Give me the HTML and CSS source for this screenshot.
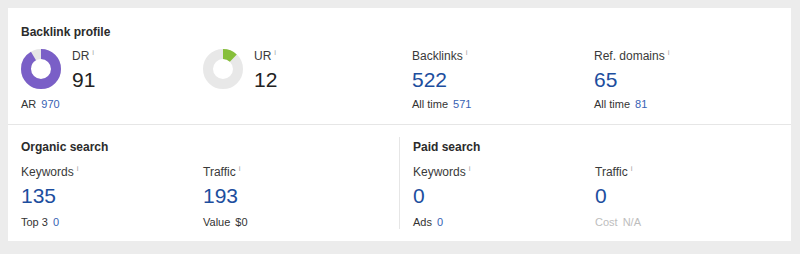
FILE: index.html
```html
<!DOCTYPE html>
<html>
<head>
<meta charset="utf-8">
<link rel="stylesheet" href="styles.css">
</head>
<body>
<div class="card">
  <section class="section top">
    <div class="half">
      <h2 class="title">Backlink profile</h2>
      <div class="metrics">
        <div class="metric">
          <div class="gauge-row">
            <svg class="donut" width="40" height="40" viewBox="0 0 40 40">
              <circle cx="20" cy="20" r="15" fill="none" stroke="#e6e6e6" stroke-width="10"/>
              <circle cx="20" cy="20" r="15" fill="none" stroke="#7a5fc7" stroke-width="10" stroke-dasharray="85.77 100" transform="rotate(-90 20 20)"/>
            </svg>
            <div class="gauge-text">
              <div class="label">DR<span class="info">i</span></div>
              <div class="value dark">91</div>
            </div>
          </div>
          <div class="sub">AR<span class="link">970</span></div>
        </div>
        <div class="metric">
          <div class="gauge-row">
            <svg class="donut" width="40" height="40" viewBox="0 0 40 40">
              <circle cx="20" cy="20" r="15" fill="none" stroke="#e8e8e8" stroke-width="10"/>
              <circle cx="20" cy="20" r="15" fill="none" stroke="#86bf3a" stroke-width="10" stroke-dasharray="11.31 100" transform="rotate(-90 20 20)"/>
            </svg>
            <div class="gauge-text">
              <div class="label">UR<span class="info">i</span></div>
              <div class="value dark">12</div>
            </div>
          </div>
        </div>
      </div>
    </div>
    <div class="half">
      <div class="title-spacer"></div>
      <div class="metrics">
        <div class="metric">
          <div class="label">Backlinks<span class="info">i</span></div>
          <div class="value">522</div>
          <div class="sub">All time<span class="link">571</span></div>
        </div>
        <div class="metric">
          <div class="label">Ref. domains<span class="info">i</span></div>
          <div class="value">65</div>
          <div class="sub">All time<span class="link">81</span></div>
        </div>
      </div>
    </div>
  </section>
  <section class="section bottom">
    <div class="half">
      <h2 class="title">Organic search</h2>
      <div class="metrics">
        <div class="metric">
          <div class="label">Keywords<span class="info">i</span></div>
          <div class="value">135</div>
          <div class="sub">Top 3<span class="link">0</span></div>
        </div>
        <div class="metric">
          <div class="label">Traffic<span class="info">i</span></div>
          <div class="value">193</div>
          <div class="sub">Value<span class="plain">$0</span></div>
        </div>
      </div>
    </div>
    <div class="half divided">
      <h2 class="title">Paid search</h2>
      <div class="metrics">
        <div class="metric">
          <div class="label">Keywords<span class="info">i</span></div>
          <div class="value">0</div>
          <div class="sub">Ads<span class="link">0</span></div>
        </div>
        <div class="metric">
          <div class="label">Traffic<span class="info">i</span></div>
          <div class="value">0</div>
          <div class="sub muted">Cost<span class="plain">N/A</span></div>
        </div>
      </div>
    </div>
  </section>
</div>
</body>
</html>
```

FILE: styles.css
```css
html, body {
  margin: 0;
  padding: 0;
}
body {
  background: #ececec;
  padding: 8px;
  font-family: "Liberation Sans", Arial, Helvetica, sans-serif;
  color: #333;
}
.card {
  width: 783px;
  height: 233px;
  background: #fff;
  display: flex;
  flex-direction: column;
}
.section {
  display: grid;
  grid-template-columns: 391px 392px;
}
.section.top {
  height: 117px;
  box-sizing: border-box;
  padding-top: 17px;
  border-bottom: 1px solid #e6e6e6;
}
.section.bottom {
  height: 115px;
  box-sizing: border-box;
  padding: 12px 0 11px;
}
.half {
  padding-left: 13px;
}
.bottom .half {
  padding-top: 3px;
}
.half.divided {
  border-left: 1px solid #e6e6e6;
}
.title {
  margin: 0;
  font-size: 12px;
  line-height: 14px;
  font-weight: bold;
  color: #2b2b2b;
}
.title-spacer {
  height: 14px;
}
.metrics {
  display: grid;
  grid-template-columns: 182px 182px;
  margin-top: 10px;
}
.bottom .metrics {
  margin-top: 11px;
}
.gauge-row {
  display: flex;
  gap: 11px;
}
.donut {
  display: block;
  flex: none;
}
.label {
  font-size: 12px;
  line-height: 15px;
  color: #3a3a3a;
}
.info {
  font-size: 8px;
  line-height: 8px;
  vertical-align: top;
  margin-left: 3px;
  color: #a8a8a8;
}
.value {
  margin-top: 4px;
  font-size: 21px;
  line-height: 24px;
  color: #1d4e9e;
}
.value.dark {
  color: #222;
}
.sub {
  margin-top: 5px;
  font-size: 11px;
  line-height: 14px;
  color: #333;
}
.bottom .sub {
  margin-top: 7px;
}
.link {
  margin-left: 5px;
  color: #3762b4;
}
.plain {
  margin-left: 5px;
}
.sub.muted {
  color: #bdbdbd;
}
```
